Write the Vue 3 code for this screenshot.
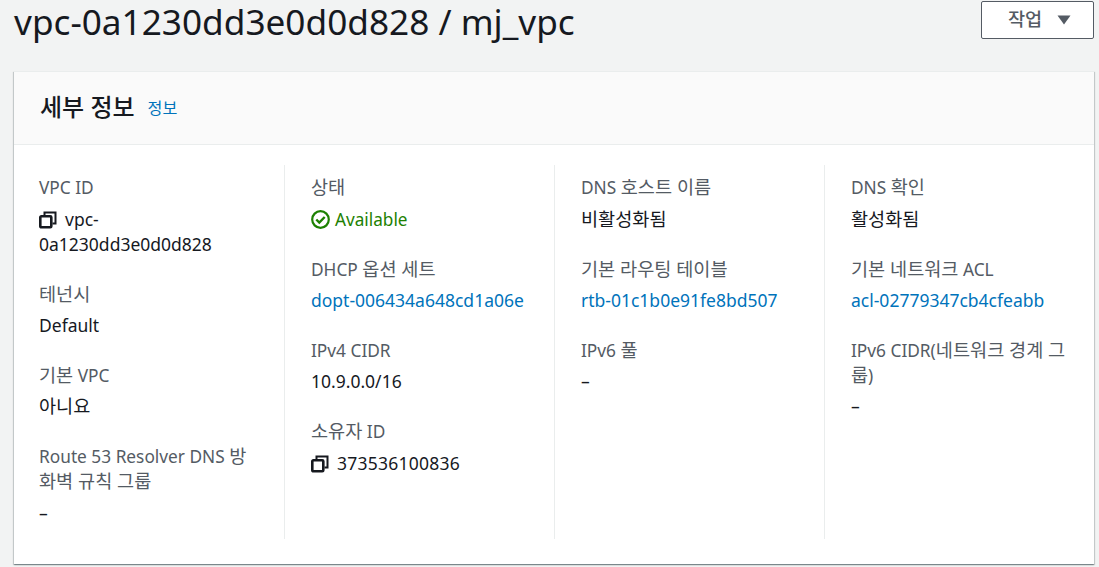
<script setup>
const columns = [
  [
    { label: 'VPC ID', value: 'vpc-0a1230dd3e0d0d828', kind: 'copy', breakAfter: 'vpc-' },
    { label: '테넌시', value: 'Default' },
    { label: '기본 VPC', value: '아니요' },
    { label: 'Route 53 Resolver DNS 방화벽 규칙 그룹', value: '–' },
  ],
  [
    { label: '상태', value: 'Available', kind: 'status' },
    { label: 'DHCP 옵션 세트', value: 'dopt-006434a648cd1a06e', kind: 'link' },
    { label: 'IPv4 CIDR', value: '10.9.0.0/16' },
    { label: '소유자 ID', value: '373536100836', kind: 'copy' },
  ],
  [
    { label: 'DNS 호스트 이름', value: '비활성화됨' },
    { label: '기본 라우팅 테이블', value: 'rtb-01c1b0e91fe8bd507', kind: 'link' },
    { label: 'IPv6 풀', value: '–' },
  ],
  [
    { label: 'DNS 확인', value: '활성화됨' },
    { label: '기본 네트워크 ACL', value: 'acl-02779347cb4cfeabb', kind: 'link' },
    { label: 'IPv6 CIDR(네트워크 경계 그룹)', value: '–' },
  ],
]

// Hangul runs are set slightly larger so they match the reference's wider Korean face.
const parts = (text) =>
  text.split(/([\uac00-\ud7a3]+(?:\s+[\uac00-\ud7a3]+)*)/).filter(Boolean).map((t) => ({
    t,
    ko: /[\uac00-\ud7a3]/.test(t),
  }))
</script>

<template>
  <div class="page">
    <header class="top">
      <h1 class="title">vpc-0a1230dd3e0d0d828 / mj_vpc</h1>
      <button class="action">
        <span>작업</span>
        <svg class="caret" width="14" height="10" viewBox="0 0 14 10"><path d="M0.5 0.5h13L7 9.500z" fill="#545b64" /></svg>
      </button>
    </header>
    <section class="card">
      <div class="card-head">
        <h2 class="card-title">세부 정보</h2>
        <a class="info">정보</a>
      </div>
      <div class="card-body">
        <div v-for="(col, i) in columns" :key="i" class="col">
          <div v-for="item in col" :key="item.label" class="item">
            <div class="label"><span v-for="(p, j) in parts(item.label)" :key="j" :class="{ ko: p.ko }">{{ p.t }}</span></div>
            <div v-if="item.kind === 'copy'" class="value" :class="{ digits: !item.breakAfter }">
              <svg class="copy" width="18" height="18" viewBox="0 0 18 18" fill="none" stroke="#16191f">
                <rect x="1.300" y="5.300" width="11" height="11" rx="1" stroke-width="2.600" />
                <path d="M5.500 4.500V1.500h11v11h-3" stroke-width="2" />
              </svg>
              <template v-if="item.breakAfter">{{ item.breakAfter }}<br />{{ item.value.slice(item.breakAfter.length) }}</template>
              <template v-else>{{ item.value }}</template>
            </div>
            <div v-else-if="item.kind === 'status'" class="value status">
              <svg class="check" width="19" height="19" viewBox="0 0 19 19" fill="none" stroke="#1d8102" stroke-width="2.200">
                <circle cx="9.500" cy="9.500" r="8.300" />
                <path d="M5.300 9.500l3 3 5.400-5.500" stroke-width="2.400" />
              </svg>
              {{ item.value }}
            </div>
            <div v-else-if="item.kind === 'link'" class="value link">{{ item.value }}</div>
            <div v-else class="value"><span v-for="(p, j) in parts(item.value)" :key="j" :class="{ ko: p.ko }">{{ p.t }}</span></div>
          </div>
        </div>
      </div>
    </section>
  </div>
</template>

<style>
html, body { margin: 0; background: #f2f3f3; }
</style>

<style scoped>
.page {
  height: 567px;
  overflow: hidden;
  box-sizing: border-box;
  padding: 0 5px 0 14px;
  background: #f2f3f3;
  font-family: "Noto Sans", "Noto Sans CJK KR", sans-serif;
  color: #16191f;
}
.top {
  display: flex;
  justify-content: space-between;
  align-items: flex-start;
  height: 71px;
}
.title {
  margin: 0;
  font-size: 35.200px;
  line-height: 42px;
  font-weight: 400;
}
.action {
  margin-top: 1px;
  width: 113px;
  height: 38px;
  display: flex;
  align-items: center;
  justify-content: center;
  gap: 15px;
  padding: 0 0 5px 4px;
  background: #fff;
  border: 1px solid #545b64;
  border-radius: 2px;
  color: #545b64;
  font: 500 18.600px "Noto Sans", "Noto Sans CJK KR", sans-serif;
}
.caret {
  margin-top: 4px;
}
.card {
  background: #fff;
  box-shadow: 0 1px 1px rgba(0, 28, 36, 0.3), 1px 1px 1px rgba(0, 28, 36, 0.15), -1px 1px 1px rgba(0, 28, 36, 0.15);
  border-top: 1px solid #eaeded;
  height: 493px;
  box-sizing: border-box;
}
.card-head {
  height: 73px;
  box-sizing: border-box;
  padding: 0 0 3px 26px;
  display: flex;
  align-items: center;
  gap: 13px;
  background: #fafafa;
  border-bottom: 1px solid #eaeded;
}
.card-title {
  margin: 0;
  font-size: 24px;
  font-weight: 500;
  line-height: 28px;
}
.info {
  font-size: 16.200px;
  color: #0073bb;
  line-height: 20px;
  margin-top: 3px;
}
.card-body {
  display: grid;
  grid-template-columns: repeat(4, 270px);
  padding-top: 20px;
}
.col {
  height: 374px;
  box-sizing: border-box;
  padding: 10.200px 26px 0 26px;
  border-left: 1px solid #eaeded;
}
.col:first-child {
  border-left: 0;
  padding-left: 25px;
}
.item {
  margin-bottom: 24.900px;
}
.label {
  font-size: 17.300px;
  line-height: 25px;
  color: #545b64;
  margin-bottom: 6.500px;
}
.value {
  font-size: 17.500px;
  line-height: 25px;
}
.digits {
  letter-spacing: 0.25px;
}
.ko {
  font-size: 18.600px;
  line-height: 1;
}
.copy {
  vertical-align: -3px;
  margin-right: 8px;
}
.status {
  color: #1d8102;
  display: flex;
  align-items: center;
  gap: 5px;
  font-size: 17.200px;
}
.link {
  color: #0073bb;
}
</style>
